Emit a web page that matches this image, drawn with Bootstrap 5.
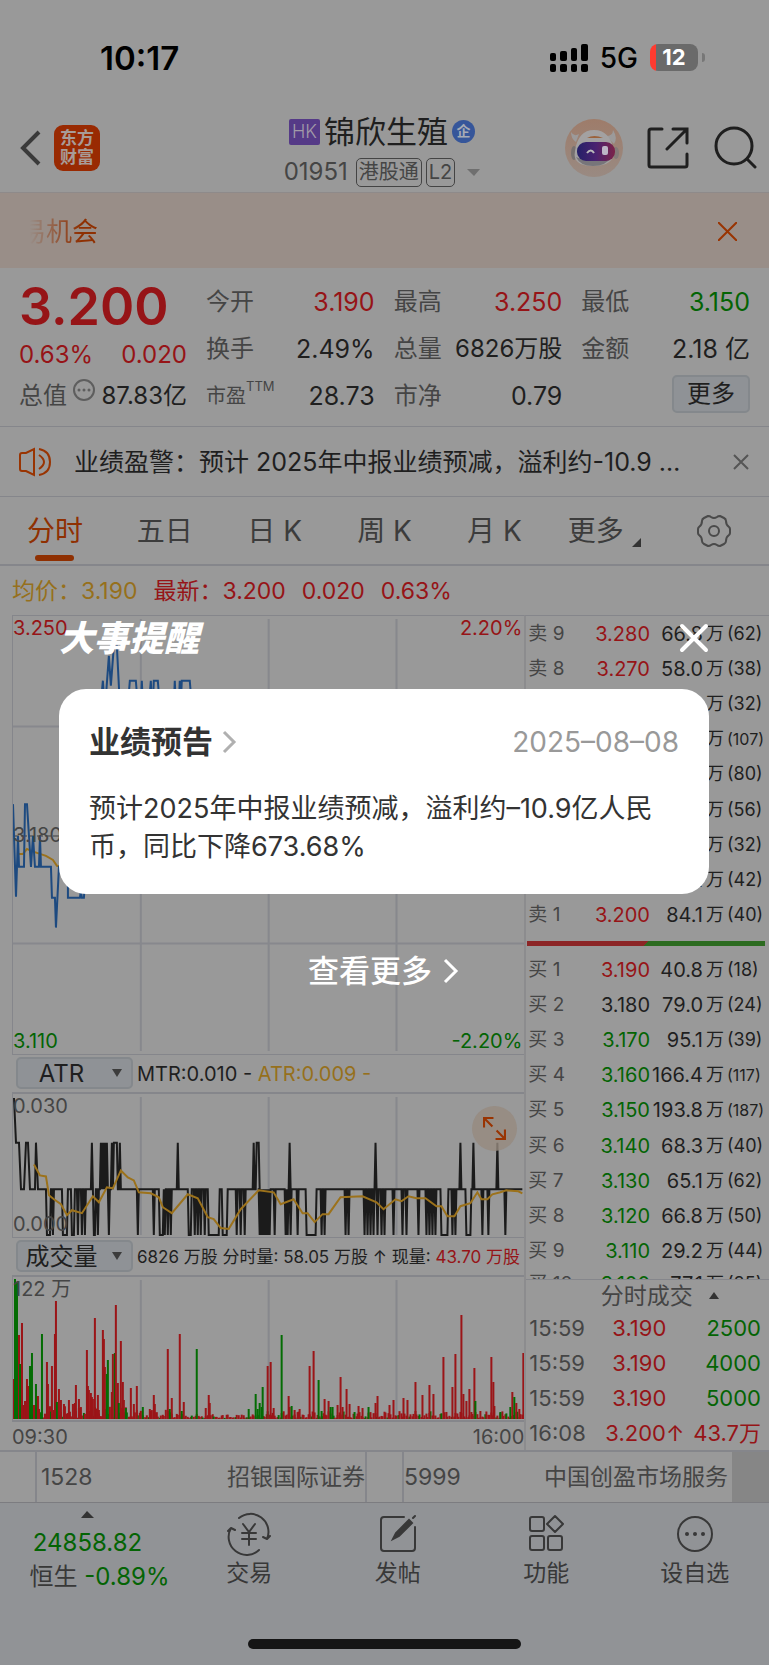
<!DOCTYPE html>
<html lang="zh-CN">
<head>
<meta charset="utf-8">
<meta name="viewport" content="width=device-width, initial-scale=1">
<title>锦欣生殖 01951</title>
<link href="https://cdn.jsdelivr.net/npm/bootstrap@5.3.0/dist/css/bootstrap.min.css" rel="stylesheet">
<style>
:root{--ink:#1f1f1f;--dim:#454545;--up:#961417;--down:#046404;--brand:#8f3002;--gold:#96701c;--rule:#85868b}
body{background:#999;color:var(--ink);font-family:Inter,"Noto Sans CJK SC",sans-serif;font-size:24px;line-height:30px;min-height:100vh}
button,select{font-family:inherit;color:inherit;line-height:inherit}
a{color:inherit;text-decoration:none}
svg{display:block}
.bare{background:none;border:0;padding:0}
.up{color:var(--up)}.down{color:var(--down)}.gold{color:var(--gold)}.dim{color:var(--dim)}
.ln{border-bottom:2px solid var(--rule)}
.status{height:108px;color:#000;padding-top:7px}
.clock{font-size:33px;font-weight:600}
.net{font-size:28px;font-weight:500}
.batt{width:48px;height:27px;border-radius:8px;background:linear-gradient(90deg,#ff3b30 6px,#6a6a6a 6px);color:#fff;font-size:22px;font-weight:700;line-height:27px}
.nub{width:3px;height:9px;border-radius:0 4px 4px 0;background:#777}
.head{height:84px;display:grid;grid-template-columns:1fr auto 1fr}
.side{padding:0 12px 5px 16px}
.who{padding:3px 5px 0 0}
.logo{width:46px;height:46px;border-radius:9px;background:#992a02;color:#a89b97;font-size:17px;line-height:19px;font-weight:700}
.hk{background:#553a87;color:#a29aa8;font-size:18px;width:31px;height:26px;line-height:26px;border-radius:2px;font-weight:300}
.stock{font-size:31px;line-height:41px}
.qi{width:23px;height:23px;border-radius:50%;background:#36569a;color:#a6abb5;font-size:14px;line-height:22px;font-weight:700}
.code{font-size:24px;line-height:40px}
.tag{border:1px solid #444;border-radius:5px;font-size:20px;line-height:27px;padding:0 2px}
.promo{height:76px;background:#998e88;font-size:26px;color:var(--brand);padding-top:2px;border-top:1px solid #8e8a8a}
.promo a{width:74px;direction:rtl;overflow:hidden;white-space:nowrap;-webkit-mask-image:linear-gradient(90deg,transparent 6px,#000 56px);mask-image:linear-gradient(90deg,transparent 6px,#000 56px)}
.quote{height:159px;border-bottom:1px solid var(--rule);padding:10px 19px 0 19px;display:grid;grid-template-columns:168px 1fr 1fr 1fr;column-gap:19px}
.price{font-size:52px;line-height:50px;font-weight:600}
.qcol{display:grid;grid-template-rows:repeat(3,47px);align-items:center}
.val{font-size:25px}
.ttm{font-size:13px;top:-12px}
.morebtn{width:78px;height:38px;border:2px solid #84888c;border-radius:5px;background:#8f9296}
.news{height:70px;font-size:25px;border-bottom:1px solid var(--rule)}
.tabs{height:69px;font-size:28px}
.tabs .nav-link{color:#3c3c3c;line-height:40px;padding:0}
.tabs .active{color:var(--brand);position:relative}
.tabs .active::after{content:"";position:absolute;left:50%;margin-left:-20px;bottom:-10px;width:39px;height:6px;border-radius:3px;background:var(--brand)}
.avg{height:49px;font-size:23px;padding-left:12px}
.left{padding-left:12px}
.book{width:245px;border-left:2px solid #8c8c8e;border-top:1px solid var(--rule)}
.plot{position:relative;border-left:1px solid var(--rule)}
.plot svg{width:100%;height:100%}
.lab{position:absolute;font-size:20px;line-height:24px}
.tl{top:0;left:0}.tr{top:0;right:2px}.ml{top:50%;left:0;margin-top:-12px}.bl{bottom:1px;left:0}.br{bottom:1px;right:2px}
.p1{height:440px;border-top:1px solid var(--rule);border-bottom:1px solid var(--rule)}
.p2{height:144px;border-bottom:1px solid var(--rule)}.p3{height:145px}
.axis{height:28px}
.ind{height:39px;padding-left:4px}
.ind select{width:117px;height:32px;font-size:24px;border:2px solid #84888c;border-radius:5px;appearance:none;padding:0 26px 0 0;text-align:center;background:#8f9296}
.ind label{position:relative}
.ind label::after{content:"";position:absolute;right:11px;top:12px;border:5px solid transparent;border-top:8px solid #3c3c3c;border-bottom:0}
.sm17{font-size:17px}.sm20{font-size:20px}
.zoomer{position:absolute;right:7px;top:12px;width:45px;height:45px;border-radius:50%;background:#96897ecc;padding:11px}
.rows9{display:grid;grid-template-rows:repeat(9,1fr);height:317px}
.lv{display:grid;grid-template-columns:34px 1fr 53px 24px 34px;align-items:center;text-align:right;font-size:20px;line-height:24px;padding:0 8px 0 2px;white-space:nowrap}
.lv :first-child{text-align:left;font-size:19px;word-spacing:0}
.lv :nth-child(4){text-align:center;font-size:18px}
.lv :last-child{text-align:left;font-size:18px}
.lv .wide3{font-size:16px}
.half{height:5px;background:linear-gradient(135deg,#8c2526 50%,#2c6b20 50%);margin:8px 4px 0 1px}
.gap6{margin-top:6px}
.peek{height:10px;overflow:hidden;padding-top:3px}
.deals{border-top:1px solid var(--rule)}
.dealhd{font-size:23px;height:31px}
.deal{display:grid;grid-template-columns:60px 77px 1fr;align-items:center;font-size:22px;line-height:28px;padding:0 8px 0 3px}
.brk{height:53px;font-size:23px;border-top:2px solid var(--rule);border-bottom:1px solid #7c7c80}
.brk>div{border-right:2px solid var(--rule)}
.brk .pad{width:37px}
.brk .endpad{background:#868686}
.foot{background:#919396;flex:1;color:#383838}
.foot .idx{width:175px;font-size:24px;line-height:34px}
.foot .act{font-size:23px;line-height:32px}
.homebar{width:273px;height:10px;border-radius:5px;background:#151515}
.layer{position:absolute;top:616px;left:0;right:0;padding:0 60px 0 59px}
.ttl{font-size:35px;line-height:44px;font-weight:900;font-style:italic;color:#fff}
.note{background:#fff;border-radius:27px;color:#333;padding:32px 30px 28px;margin-top:29px}
.note h2{font-size:31px;line-height:42px;font-weight:700;margin:0}
.note time{font-size:28px;color:#999}
.note p{font-size:27px;line-height:38px;margin:27px 0 0}
.see{font-size:31px;line-height:42px;font-weight:500;color:#fff;margin-top:56px}
</style>
</head>
<body class="d-flex flex-column position-relative">

<div class="status d-flex justify-content-between align-items-center px-5">
  <div class="clock ps-5 ms-1">10:17</div>
  <div class="d-flex align-items-center pe-3">
    <svg width="38" height="28" viewBox="0 0 38 28"><rect x="0" y="9" width="6" height="8" rx="2"/><rect x="10" y="7" width="7" height="10" rx="2"/><rect x="21" y="4" width="6" height="13" rx="2"/><rect x="31" y="0" width="7" height="17" rx="2"/><rect x="0" y="20" width="6" height="8" rx="2"/><rect x="10" y="20" width="7" height="8" rx="2"/><rect x="21" y="20" width="6" height="8" rx="2"/><rect x="31" y="20" width="7" height="8" rx="2"/></svg>
    <span class="net px-2 mx-1">5G</span>
    <div class="batt text-center">12</div><div class="nub ms-1"></div>
  </div>
</div>

<header class="head">
  <div class="side d-flex align-items-center gap-2">
    <button class="bare" aria-label="返回"><svg width="30" height="36" viewBox="0 0 30 36" fill="none" stroke="#3a3a3a" stroke-width="4"><path d="M23 2 7 18l16 16"/></svg></button>
    <a href="#" class="logo d-flex flex-column justify-content-center text-center">东方<br>财富</a>
  </div>
  <div class="who d-flex flex-column align-items-center">
    <div class="d-flex align-items-center gap-1">
      <span class="hk text-center">HK</span><span class="stock">锦欣生殖</span><span class="qi text-center">企</span>
    </div>
    <div class="code dim d-flex align-items-center gap-1">
      <span class="me-1">01951</span><span class="tag">港股通</span><span class="tag">L2</span>
      <svg class="ms-2" width="13" height="7"><path d="M0 0h13l-6 7z" fill="#6f6f6f"/></svg>
    </div>
  </div>
  <div class="side d-flex align-items-center justify-content-end">
    <button class="bare me-4" aria-label="智能助手"><svg width="58" height="58" viewBox="0 0 58 58"><defs><linearGradient id="ha" x2="0" y2="1"><stop offset="0" stop-color="#9e7c6a"/><stop offset="1" stop-color="#998a82"/></linearGradient><linearGradient id="vz"><stop offset="0" stop-color="#252168"/><stop offset=".5" stop-color="#4a2270"/><stop offset="1" stop-color="#7c2448"/></linearGradient></defs><circle cx="29" cy="29" r="29" fill="url(#ha)"/><path d="M6 13q3 5 8 2l-3 8q-5-3-5-10zM48 11q5 8 1 14l-8-8q7 0 7-6z" fill="#9c9a9a"/><ellipse cx="9" cy="34" rx="3" ry="7" fill="#77716f"/><ellipse cx="51" cy="34" rx="3" ry="6" fill="#837a78"/><path d="M10 32Q13 11 29 11t20 21q0 15-21 15T10 32z" fill="#a3a1a1"/><path d="M11 38q4 9 17 9t20-10q-8 5-18 5t-19-4z" fill="#77757a"/><path d="M22 19q7-4 16 0z" fill="#9b623b"/><rect x="12" y="23" width="38" height="19" rx="9" fill="url(#vz)"/><path d="M22 34q4-5 7 0" fill="none" stroke="#bbb" stroke-width="2"/><rect x="37" y="27" width="6" height="9" rx="2" fill="#bdb6c6"/></svg></button>
    <button class="bare me-4" aria-label="分享"><svg width="42" height="42" viewBox="0 0 42 42" fill="none" stroke="#1f1f1f" stroke-width="3" stroke-linecap="round"><path d="M15 2H4Q2 2 2 4v34q0 2 2 2h34q2 0 2-2V27M26 2h14v14M40 2 20 22"/></svg></button>
    <button class="bare" aria-label="搜索"><svg width="44" height="44" viewBox="0 0 44 44" fill="none" stroke="#1f1f1f" stroke-width="3" stroke-linecap="round"><circle cx="21" cy="20" r="18"/><path d="m34 33 8 8"/></svg></button>
  </div>
</header>

<div class="promo d-flex align-items-center justify-content-between">
  <a href="#" class="ms-4">易机会</a>
  <button class="bare me-4 px-2" aria-label="关闭公告"><svg width="19" height="19" viewBox="0 0 19 19" stroke="#993402" stroke-width="2"><path d="m0 0 19 19M19 0 0 19"/></svg></button>
</div>

<section class="quote">
  <div>
    <div class="price up pt-1">3.200</div>
    <div class="up d-flex justify-content-between pt-2"><span>0.63%</span><span>0.020</span></div>
    <div class="d-flex justify-content-between align-items-center pt-2"><span class="dim">总值</span>
      <svg width="22" height="36" viewBox="0 0 22 36"><circle cx="11" cy="12" r="10" fill="none" stroke="#5e5e5e" stroke-width="2"/><g fill="#5e5e5e"><circle cx="6" cy="12" r="1.500"/><circle cx="11" cy="12" r="1.500"/><circle cx="16" cy="12" r="1.500"/></g></svg>
      <span>87.83亿</span></div>
  </div>
  <div class="qcol">
    <div class="d-flex justify-content-between"><span class="dim">今开</span><span class="val up">3.190</span></div>
    <div class="d-flex justify-content-between"><span class="dim">换手</span><span class="val">2.49%</span></div>
    <div class="d-flex justify-content-between"><span class="dim sm20 text-nowrap">市盈<sup class="ttm">TTM</sup></span><span class="val">28.73</span></div>
  </div>
  <div class="qcol">
    <div class="d-flex justify-content-between"><span class="dim">最高</span><span class="val up">3.250</span></div>
    <div class="d-flex justify-content-between text-nowrap"><span class="dim">总量</span><span>6826万股</span></div>
    <div class="d-flex justify-content-between"><span class="dim">市净</span><span class="val">0.79</span></div>
  </div>
  <div class="qcol">
    <div class="d-flex justify-content-between"><span class="dim">最低</span><span class="val down">3.150</span></div>
    <div class="d-flex justify-content-between text-nowrap"><span class="dim">金额</span><span class="val">2.18 亿</span></div>
    <div class="d-flex justify-content-end"><button class="morebtn p-0 mb-1">更多</button></div>
  </div>
</section>

<div class="news d-flex align-items-center">
  <svg class="mx-3 flex-shrink-0" width="38" height="30" viewBox="0 0 38 30" fill="none" stroke="#993402" stroke-width="2"><path d="M18 2v26l-8-4H6q-2 0-2-2V8q0-2 2-2h4zM23 8q10 7 0 14M23 2q11 2 11 13T23 28"/></svg>
  <a href="#" class="flex-grow-1 text-nowrap ms-1">业绩盈警：预计 2025年中报业绩预减，溢利约-10.9 …</a>
  <button class="bare me-3" aria-label="关闭"><svg class="me-1" width="16" height="16" viewBox="0 0 16 16" stroke="#555" stroke-width="2"><path d="m1 1 14 14M15 1 1 15"/></svg></button>
</div>

<nav class="tabs nav align-items-center flex-nowrap text-center ln">
  <div class="col"><a href="#" class="nav-link active">分时</a></div>
  <div class="col"><a href="#" class="nav-link">五日</a></div>
  <div class="col"><a href="#" class="nav-link">日 K</a></div>
  <div class="col"><a href="#" class="nav-link">周 K</a></div>
  <div class="col"><a href="#" class="nav-link">月 K</a></div>
  <div class="col"><a href="#" class="nav-link d-flex justify-content-center align-items-center">更多<svg class="ms-2 mt-4" width="9" height="9"><path d="M9 0v9H0z" fill="#333"/></svg></a></div>
  <div class="col"><a href="#" class="nav-link d-flex justify-content-center" aria-label="设置"><svg width="34" height="34" viewBox="0 0 34 34" fill="none" stroke="#4a4a4a" stroke-width="2" stroke-linejoin="round"><circle cx="17" cy="17" r="5"/><path d="M11 2Q13 2 14 3q3 2 6 0 1-1 3-1l4 2q2 1 2 3 0 4 3 6 1 1 1 2v4q0 1-1 2-3 2-3 6 0 2-2 3l-4 2q-2 0-3-1-3-2-6 0-1 1-3 1l-4-2q-2-1-2-3 0-4-3-6-1-1-1-2v-4q0-1 1-2 3-2 3-6 0-2 2-3z"/></svg></a></div>
</nav>

<div class="avg up d-flex align-items-center text-nowrap gap-3">
  <span class="gold">均价：3.190</span><span>最新：3.200</span><span>0.020</span><span>0.63%</span>
</div>

<main class="d-flex">
  <div class="left flex-grow-1">
    <div class="plot p1">
      <svg viewBox="0 0 512 440" preserveAspectRatio="none" fill="none">
        <path d="M0 111h512M0 329h512M128 3v434M256 3v434M384 3v434" stroke="#87888d" stroke-width="2"/>
        <path d="M0 221h512" stroke="#3e3e3e" stroke-dasharray="6 2"/>
        <path d="M6 239h4l4-5 4 2 15 5 7 4 4 6 6 1 40 0" stroke="#9c721b" stroke-width="2"/>
        <path d="M0 189 3 282 5 221 6 252h5L12 189h2l2 32 2 31 2-31 2 31h4l1-31 1 31h10l1 31h3l1 30 3-61h9v31h12l1-7 1 7 2 0 2-31L90 65l2 30 4-55 2 30 3-40h3l3 60h8l2-25h6l2 25h3l1-25 1 25h6l2-25 1 25h1l1-25h4l2 25h14l1-25 1 25h3l1-25 1 25 1-25h8l2 25 30 70 60-20 60 100v38h6v-38l70 0v38h3v-38h3v38h4v-38h90" stroke="#1d4a80" stroke-width="2"/>
      </svg>
      <span class="lab tl up">3.250</span><span class="lab tr up">2.20%</span><span class="lab ml dim">3.180</span><span class="lab bl down">3.110</span><span class="lab br down">-2.20%</span>
    </div>
    <div class="ind d-flex align-items-center gap-1 ln sm20">
      <label><select aria-label="指标"><option>ATR</option></select></label>
      <span class="text-nowrap">MTR:0.010 - <span class="gold">ATR:0.009 -</span></span>
    </div>
    <div class="plot p2">
      <svg id="atr" viewBox="0 0 512 144" preserveAspectRatio="none" fill="none">
        <path d="M128 3v139M256 3v139M384 3v139" stroke="#87888d" stroke-width="2"/>
      </svg>
      <span class="lab tl dim">0.030</span><span class="lab bl dim">0.000</span>
      <button class="bare zoomer" aria-label="放大"><svg viewBox="0 0 22 22" fill="none" stroke="#993402" stroke-width="2"><path d="M1 10V1h9M1 1l8 8M21 12v9h-9M21 21l-8-8"/></svg></button>
    </div>
    <div class="ind d-flex align-items-center gap-1 ln sm17">
      <label><select aria-label="副图"><option>成交量</option></select></label>
      <span class="text-nowrap">6826 万股 分时量: 58.05 万股 ↑ 现量: <span class="up">43.70 万股</span></span>
    </div>
    <div class="plot p3 ln">
      <svg id="vol" viewBox="0 0 512 143" preserveAspectRatio="none">
        <path d="M128 3v139M256 3v139M384 3v139" stroke="#87888d" stroke-width="2"/>
      </svg>
      <span class="lab tl dim">122 万</span>
    </div>
    <div class="axis d-flex justify-content-between dim sm20"><span>09:30</span><span>16:00</span></div>
  </div>

  <div class="book d-flex flex-column">
    <div class="rows9" id="sell"></div>
    <div class="half"></div>
    <div class="rows9 gap6" id="buy"></div>
    <div class="peek" id="peek"></div>
    <div class="deals flex-grow-1 d-flex flex-column">
      <button class="bare dealhd dim ps-4 d-flex justify-content-center align-items-center">分时成交<svg class="ms-3" width="10" height="7"><path d="M0 7h10L5 0z" fill="#333"/></svg></button>
      <div class="deal flex-fill"><span class="dim">15:59</span><span class="up text-end">3.190</span><span class="down text-end">2500</span></div>
      <div class="deal flex-fill"><span class="dim">15:59</span><span class="up text-end">3.190</span><span class="down text-end">4000</span></div>
      <div class="deal flex-fill"><span class="dim">15:59</span><span class="up text-end">3.190</span><span class="down text-end">5000</span></div>
      <div class="deal flex-fill text-nowrap"><span class="dim">16:08</span><span class="up ps-3">3.200↑</span><span class="up text-end">43.7万</span></div>
    </div>
  </div>
</main>

<div class="brk dim d-flex align-items-stretch text-nowrap">
  <div class="pad"></div>
  <div class="col d-flex align-items-center justify-content-between ps-1"><span>1528</span><span>招银国际证券</span></div>
  <div class="pad"></div>
  <div class="col d-flex align-items-center justify-content-between pe-1 border-0"><span>5999</span><span>中国创盈市场服务</span></div>
  <div class="pad endpad border-0"></div>
</div>

<footer class="foot d-flex flex-column justify-content-between">
  <div class="d-flex">
    <a href="#" class="idx pt-2 d-flex flex-column align-items-center"><svg width="13" height="7"><path d="M0 7h13L6 0z" fill="#333"/></svg><span class="down pt-2">24858.82</span><span class="text-nowrap ps-4">恒生 <span class="down">-0.89%</span></span></a>
    <a href="#" class="act col d-flex flex-column align-items-center pt-2"><svg width="46" height="46" viewBox="0 0 46 46" fill="none" stroke="#383838" stroke-width="2" stroke-linecap="round"><path d="M13 7A18 18 0 0 1 41 28M41 28l3-3M41 28l-4-2M33 39A18 18 0 0 1 5 17M5 17l-3 3M5 17l4 2M17 13l6 8 6-8M23 21v13M16 22h14M16 28h14"/></svg><span>交易</span></a>
    <a href="#" class="act col d-flex flex-column align-items-center pt-2"><svg width="46" height="46" viewBox="0 0 46 46" fill="none" stroke="#383838" stroke-width="2" stroke-linecap="round"><path d="M29 6H9Q6 6 6 9v28q0 3 3 3h28q3 0 3-3V16"/><path d="M18 28l3-6L34 9l3 3-13 13zM38 7l2-2" fill="#383838"/></svg><span>发帖</span></a>
    <a href="#" class="act col d-flex flex-column align-items-center pt-2"><svg width="46" height="46" viewBox="0 0 46 46" fill="none" stroke="#383838" stroke-width="2"><rect x="7" y="6" width="14" height="14" rx="2"/><rect x="7" y="25" width="14" height="14" rx="2"/><rect x="25" y="25" width="14" height="14" rx="2"/><path d="m32 5 8 8-8 8-8-8z" stroke-linejoin="round"/></svg><span>功能</span></a>
    <a href="#" class="act col d-flex flex-column align-items-center pt-2"><svg width="46" height="46" viewBox="0 0 46 46"><circle cx="23" cy="23" r="17" fill="none" stroke="#383838" stroke-width="2"/><g fill="#383838"><circle cx="15" cy="23" r="2"/><circle cx="23" cy="23" r="2"/><circle cx="31" cy="23" r="2"/></g></svg><span>设自选</span></a>
  </div>
  <div class="homebar align-self-center mb-3"></div>
</footer>

<section class="layer" role="dialog" aria-label="大事提醒">
  <div class="d-flex justify-content-between align-items-center">
    <span class="ttl">大事提醒</span>
    <button class="bare" aria-label="关闭提醒"><svg width="30" height="30" viewBox="0 0 30 30" stroke="#fff" stroke-width="4" stroke-linecap="round"><path d="m3 3 24 24M27 3 3 27"/></svg></button>
  </div>
  <div class="note">
    <div class="d-flex justify-content-between align-items-center">
      <h2 class="d-flex align-items-center">业绩预告<svg class="ms-2" width="16" height="24" viewBox="0 0 16 24" fill="none" stroke="#b0b0b0" stroke-width="3"><path d="m3 2 10 10L3 22"/></svg></h2>
      <time datetime="2025-08-08">2025–08–08</time>
    </div>
    <p>预计2025年中报业绩预减，溢利约–10.9亿人民币，同比下降673.68%</p>
  </div>
  <a href="#" class="see d-flex justify-content-center align-items-center">查看更多<svg class="ms-2" width="20" height="26" viewBox="0 0 20 26" fill="none" stroke="#fff" stroke-width="3"><path d="m5 2 11 11L5 24"/></svg></a>
</section>

<script>
// Order book levels: side label, price, colour, volume, order count
const row = (n, p, c, v, k) => `<div class="lv"><span class="dim">${n}</span><span class="${c}">${p}</span><span>${v}</span><span>万</span><span class="${k.length > 2 ? 'wide3' : ''}">(${k})</span></div>`;
const sell = [['3.280','66.8','62'],['3.270','58.0','38'],['3.260','61.2','32'],['3.250','42.6','107'],['3.240','70.4','80'],['3.230','52.8','56'],['3.220','48.6','32'],['3.210','60.2','42'],['3.200','84.1','40']];
document.getElementById('sell').innerHTML = sell.map((r, i) => row('卖 ' + (9 - i), r[0], 'up', r[1], r[2])).join('');
const buy = [['3.190','40.8','18','up'],['3.180','79.0','24',''],['3.170','95.1','39','down'],['3.160','166.4','117','down'],['3.150','193.8','187','down'],['3.140','68.3','40','down'],['3.130','65.1','62','down'],['3.120','66.8','50','down'],['3.110','29.2','44','down']];
document.getElementById('buy').innerHTML = buy.map((r, i) => row('买 ' + (i + 1), r[0], r[3], r[1], r[2])).join('');
document.getElementById('peek').innerHTML = row('买 10', '3.100', 'down', '77.1', '85');

// True range: spikes and dips away from the middle level
const NS = 'http://www.w3.org/2000/svg';
const up = [91,100,102,104,106,111,[113,116],119,177,253,[256,258],289,375,460,473,497];
const dn = [[46,49],52,[62,66],[71,73],77,81,84,[93,94],97,108,137,153,[159,162],164,167,170,[188,190],194,197,200,204,[208,218],[222,226],236,240,244,259,261,263,265,267,269,274,285,287,290,297,[306,315],321,324,345,348,364,367,370,373,377,381,384,393,402,406,418,426,429,432,435,[441,447],452,455,[466,470],482,488,505];
const ev = [...up.map(x => [x, 49]), ...dn.map(x => [x, 142])].map(([x, y]) => [].concat(x, x).slice(0, 2).concat(y)).sort((a, b) => a[0] - b[0]);
let d = 'M1 4 3 49H6L8 96H11L13 49H15L17 96H22L23 49 25 96';
ev.forEach(([a, b, y]) => { d += `H${a - 13}L${a - 12} ${y}H${b - 12}L${b - 11} 96`; });
const line = (svg, path, c) => { const e = document.createElementNS(NS, 'path'); e.setAttribute('d', path); e.setAttribute('stroke', c); e.setAttribute('stroke-width', 2); svg.appendChild(e); };
const atr = document.getElementById('atr');
line(atr, d + 'H510', '#1b1b1b');
const avg = '33,71 39,82 45,83 48,102 53,106 60,111 66,122 71,117 81,120 92,103 98,109 106,94 112,95 120,77 127,84 133,87 138,99 150,100 158,104 162,114 171,120 187,101 197,105 207,124 213,126 220,135 228,136 240,116 258,97 273,99 280,111 293,106 302,120 307,120 314,129 322,121 328,121 340,104 362,103 376,109 383,116 395,106 401,108 408,103 416,105 425,105 436,113 441,113 447,123 454,123 460,113 470,110 477,99 481,106 487,106 492,101 500,99 506,97 518,98 522,100';
line(atr, 'M' + avg.split(' ').map(p => { const [x, y] = p.split(','); return (x - 12) + ' ' + y; }).join('L'), '#9c721b');

// Volume per minute: x, height, g = falling
const vol = document.getElementById('vol');
const bar = (x, h, g) => { const e = document.createElementNS(NS, 'rect'); e.setAttribute('x', x); e.setAttribute('y', 142 - h); e.setAttribute('width', 2); e.setAttribute('height', h); e.setAttribute('fill', g ? '#046c04' : '#9b1518'); vol.appendChild(e); };
for (let i = 0; i < 330; i++) {
  const x = Math.round(i * 512 / 330), w = x < 118 ? 12 : x < 165 ? 9 : x < 250 ? 4 : 7;
  bar(x, 1 + Math.abs(Math.sin(i * 12.9) * Math.cos(i * 4.1)) * w, i % 7 === 3);
}
const v = '0,40 1,140,g 3,136,g 5,84 6,55,g 8,96 9,14 11,18 13,40 14,33 16,53,g 18,66,g 20,14 22,35,g 24,23 25,10 28,85,g 33,57 34,35 38,53 41,85 42,118 43,17,g 45,30 47,19 50,15 55,19 59,15 61,16 62,34 65,20 73,69 74,33 75,29 77,26 78,22 79,20 81,101 83,10 84,24 85,9 89,89 90,80 91,52 93,45,g 94,59,g 98,27 99,65 101,66,g 102,114 104,36 105,16,g 107,78 109,37 110,19 112,11,g 117,31 120,15 123,33 129,12,g 136,10 140,24 141,15 154,70 156,10,g 158,21 166,85 168,8,g 170,17 183,70,g 192,11 195,24 196,16 235,10,g 242,25,g 244,10,g 246,16,g 248,12,g 249,32,g 254,53 257,57 260,11 268,84,g 275,23 276,12 278,13,g 281,9 286,10 296,53 300,68 305,39,g 308,8,g 311,20 315,18 317,12,g 319,12,g 324,14 327,42 329,12 333,30 336,15 345,13 349,11 355,12,g 362,16 364,23 376,14 380,19 390,21 394,19 402,37 409,24 416,34 420,25 430,62 439,32 442,65 448,104 450,25 453,18 456,30 461,51 462,18,g 467,8 478,62 480,37 481,13 487,7,g 497,12,g 499,27 501,22,g 503,16 506,10 510,66';
v.split(' ').forEach(s => { const [x, h, g] = s.split(','); bar(+x, +h, g); });
</script>
<script src="https://cdn.jsdelivr.net/npm/bootstrap@5.3.0/dist/js/bootstrap.bundle.min.js"></script>
</body>
</html>
